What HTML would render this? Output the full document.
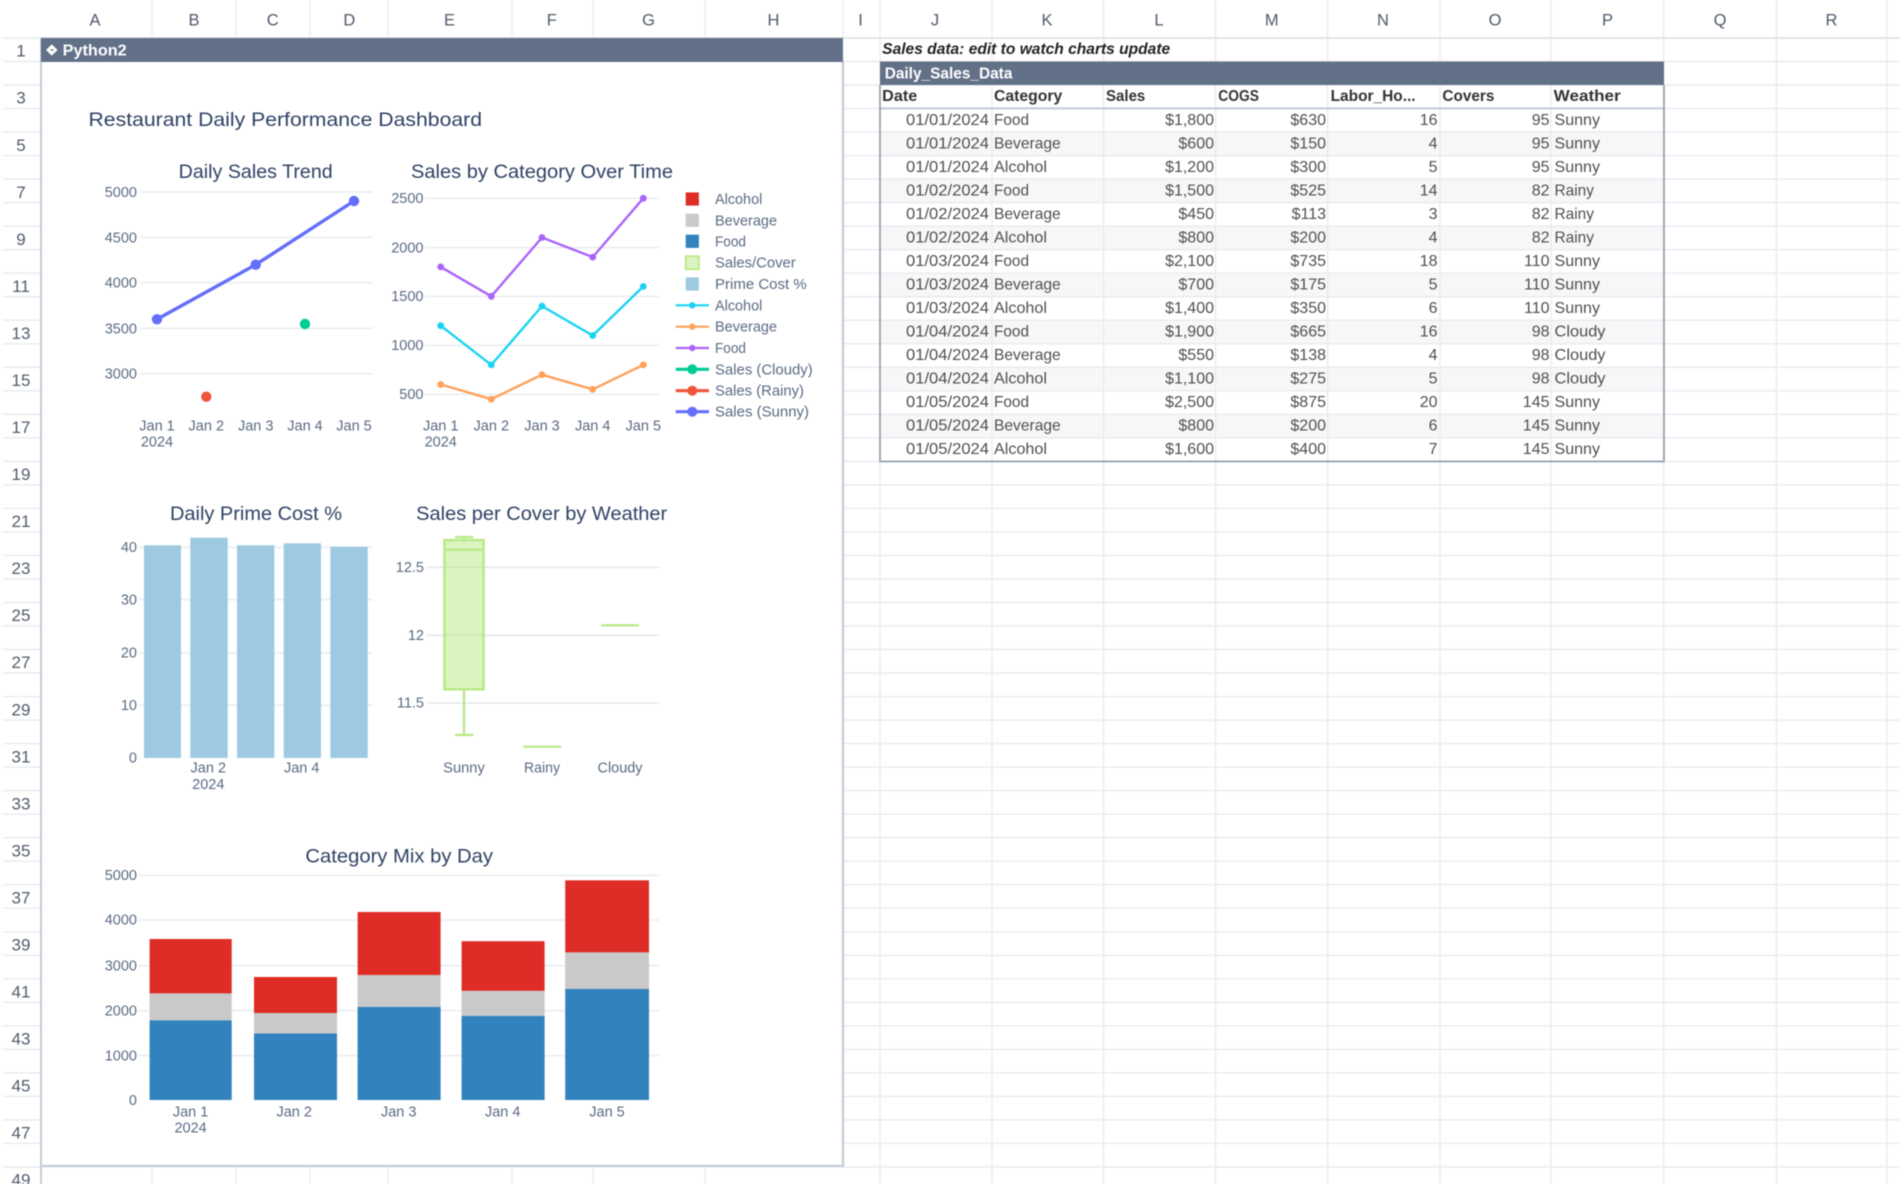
<!DOCTYPE html>
<html lang="en">
<head>
<meta charset="utf-8">
<title>Restaurant Daily Performance Dashboard</title>
<style>
html,body{margin:0;padding:0;background:#fff;width:1900px;height:1184px;overflow:hidden}
svg{display:block;filter:blur(.55px)}
text{font-family:"Liberation Sans",sans-serif}
.ch{font-size:16.5px;fill:#4f5a6b;text-anchor:middle}
.rh{font-size:17px;fill:#525c6c;text-anchor:middle}
.ttl{font-size:19.5px;fill:#2f4264;text-anchor:middle}
.tk{font-size:14.5px;fill:#5a6a84}
.ty{text-anchor:end}
.tx{text-anchor:middle}
.lg{font-size:14.5px;fill:#5a6a84}
.th{font-size:15.5px;font-weight:bold;fill:#333}
.td{font-size:16px;fill:#505050}
.r{text-anchor:end}
</style>
</head>
<body>
<svg xmlns="http://www.w3.org/2000/svg" width="1900" height="1184" viewBox="0 0 1900 1184">
<rect width="1900" height="1184" fill="#fff"/>

<!-- sheet grid -->
<g fill="none" stroke="#e8ebf0" stroke-width="1.4">
<path d="M843 85H1900M843 108.6H1900M843 132.1H1900M843 155.6H1900M843 179.1H1900M843 202.6H1900M843 226.2H1900M843 249.7H1900M843 273.2H1900M843 296.7H1900M843 320.2H1900M843 343.8H1900M843 367.3H1900M843 390.8H1900M843 414.3H1900M843 437.8H1900M843 461.4H1900M843 484.9H1900M843 508.4H1900M843 531.9H1900M843 555.4H1900M843 579H1900M843 602.5H1900M843 626H1900M843 649.5H1900M843 673H1900M843 696.6H1900M843 720.1H1900M843 743.6H1900M843 767.1H1900M843 790.6H1900M843 814.2H1900M843 837.7H1900M843 861.2H1900M843 884.7H1900M843 908.2H1900M843 931.8H1900M843 955.3H1900M843 978.8H1900M843 1002.3H1900M843 1025.8H1900M843 1049.4H1900M843 1072.9H1900M843 1096.4H1900M843 1119.9H1900M843 1143.4H1900M843 1167H1900M843 61.5H1900"/>
<path d="M3 38H41M3 61.5H41M3 85H41M3 108.6H41M3 132.1H41M3 155.6H41M3 179.1H41M3 202.6H41M3 226.2H41M3 249.7H41M3 273.2H41M3 296.7H41M3 320.2H41M3 343.8H41M3 367.3H41M3 390.8H41M3 414.3H41M3 437.8H41M3 461.4H41M3 484.9H41M3 508.4H41M3 531.9H41M3 555.4H41M3 579H41M3 602.5H41M3 626H41M3 649.5H41M3 673H41M3 696.6H41M3 720.1H41M3 743.6H41M3 767.1H41M3 790.6H41M3 814.2H41M3 837.7H41M3 861.2H41M3 884.7H41M3 908.2H41M3 931.8H41M3 955.3H41M3 978.8H41M3 1002.3H41M3 1025.8H41M3 1049.4H41M3 1072.9H41M3 1096.4H41M3 1119.9H41M3 1143.4H41M3 1167H41"/>
<path d="M152 0V38M236 0V38M310 0V38M388 0V38M512 0V38M593 0V38M705 0V38M843 0V38M880 0V38M992 0V38M1103.5 0V38M1215.5 0V38M1327.7 0V38M1440 0V38M1551 0V38M1663.6 0V38M1776.5 0V38M1887 0V38"/>
<path d="M152 1167V1184M236 1167V1184M310 1167V1184M388 1167V1184M512 1167V1184M593 1167V1184M705 1167V1184"/>
</g>
<path d="M41 38H1900" stroke="#e2e5ea" stroke-width="2"/>

<!-- zebra and table -->
<g fill="#f7f7f7">
<rect x="880" y="132.1" width="784" height="23.5"/><rect x="880" y="179.1" width="784" height="23.5"/><rect x="880" y="226.2" width="784" height="23.5"/><rect x="880" y="273.2" width="784" height="23.5"/><rect x="880" y="320.2" width="784" height="23.5"/><rect x="880" y="367.3" width="784" height="23.5"/><rect x="880" y="414.3" width="784" height="23.5"/>
</g>
<path d="M880 132.1H1664M880 155.6H1664M880 179.1H1664M880 202.6H1664M880 226.2H1664M880 249.7H1664M880 273.2H1664M880 296.7H1664M880 320.2H1664M880 343.8H1664M880 367.3H1664M880 390.8H1664M880 414.3H1664M880 437.8H1664" stroke="#e8ebf0" stroke-width="1.4" fill="none"/>
<path d="M880 38V1184M992 38V1184M1103.5 38V1184M1215.5 38V1184M1327.7 38V1184M1440 38V1184M1551 38V1184M1663.6 38V1184M1776.5 38V1184M1887 38V1184" stroke="#e8ebf0" stroke-width="1.4" fill="none"/>
<rect x="880" y="61.5" width="784" height="23.5" fill="#627188"/>
<path d="M880 108.4H1664" stroke="#c3cbd8" stroke-width="2"/>
<path d="M880 85V461.4H1664V85" fill="none" stroke="#8c9ab0" stroke-width="1.6"/>

<!-- column headers -->
<text class="ch" x="95" y="25.5">A</text><text class="ch" x="194" y="25.5">B</text><text class="ch" x="272.7" y="25.5">C</text><text class="ch" x="349.3" y="25.5">D</text><text class="ch" x="449.5" y="25.5">E</text><text class="ch" x="551.8" y="25.5">F</text><text class="ch" x="648.6" y="25.5">G</text><text class="ch" x="773.5" y="25.5">H</text><text class="ch" x="860.5" y="25.5">I</text><text class="ch" x="935" y="25.5">J</text><text class="ch" x="1047" y="25.5">K</text><text class="ch" x="1159" y="25.5">L</text><text class="ch" x="1271.7" y="25.5">M</text><text class="ch" x="1383" y="25.5">N</text><text class="ch" x="1495" y="25.5">O</text><text class="ch" x="1607.5" y="25.5">P</text><text class="ch" x="1720" y="25.5">Q</text><text class="ch" x="1831.5" y="25.5">R</text>

<!-- row headers -->
<g transform="translate(0 -.8)">
<text class="rh" x="21" y="57.5">1</text><text class="rh" x="21" y="104.5">3</text><text class="rh" x="21" y="151.6">5</text><text class="rh" x="21" y="198.6">7</text><text class="rh" x="21" y="245.7">9</text><text class="rh" x="21" y="292.7">11</text><text class="rh" x="21" y="339.7">13</text><text class="rh" x="21" y="386.8">15</text><text class="rh" x="21" y="433.8">17</text><text class="rh" x="21" y="480.9">19</text><text class="rh" x="21" y="527.9">21</text><text class="rh" x="21" y="574.9">23</text><text class="rh" x="21" y="622">25</text><text class="rh" x="21" y="669">27</text><text class="rh" x="21" y="716.1">29</text><text class="rh" x="21" y="763.1">31</text><text class="rh" x="21" y="810.1">33</text><text class="rh" x="21" y="857.2">35</text><text class="rh" x="21" y="904.2">37</text><text class="rh" x="21" y="951.3">39</text><text class="rh" x="21" y="998.3">41</text><text class="rh" x="21" y="1045.3">43</text><text class="rh" x="21" y="1092.4">45</text><text class="rh" x="21" y="1139.4">47</text><text class="rh" x="21" y="1186.5">49</text>
</g>

<!-- python cell -->
<rect x="41" y="61" width="802" height="1106" fill="#fff"/>
<path d="M41 38V1184" stroke="#c3cad6" stroke-width="2"/>
<path d="M843 61V1166H41" fill="none" stroke="#c8ced9" stroke-width="2.4"/>
<rect x="41" y="38" width="802" height="24" fill="#627188"/>
<path d="M51.7 44.4L57.6 50L51.7 55.6L46 50Z" fill="#fff"/>
<path d="M50.5 50H53.6" stroke="#7f8da3" stroke-width="1.6"/>
<text x="62.7" y="55.5" font-size="15.5" font-weight="bold" fill="#fff" textLength="64" lengthAdjust="spacingAndGlyphs">Python2</text>

<!-- main title -->
<text x="88.5" y="126" font-size="19.5" fill="#2f4264" textLength="393.5" lengthAdjust="spacingAndGlyphs">Restaurant Daily Performance Dashboard</text>

<!-- Chart 1 -->
<text class="ttl" x="255.7" y="177.8" textLength="154" lengthAdjust="spacingAndGlyphs">Daily Sales Trend</text>
<path d="M140 192H372.7M140 237.3H372.7M140 282.7H372.7M140 328.3H372.7M140 373.7H372.7" stroke="#e9ecf1" stroke-width="1.6" fill="none"/>
<g class="tk ty"><text x="137" y="197">5000</text><text x="137" y="242.3">4500</text><text x="137" y="287.7">4000</text><text x="137" y="333.3">3500</text><text x="137" y="378.7">3000</text></g>
<path d="M157 319.3L255.7 264.7L354 201" fill="none" stroke="#636efa" stroke-width="3.4"/>
<circle cx="157" cy="319.3" r="5.2" fill="#636efa"/><circle cx="255.7" cy="264.7" r="5.2" fill="#636efa"/><circle cx="354" cy="201" r="5.2" fill="#636efa"/>
<circle cx="206.3" cy="396.7" r="5.2" fill="#ef553b"/><circle cx="305" cy="324" r="5.2" fill="#00cc96"/>
<g class="tk tx"><text x="157" y="430.7">Jan 1</text><text x="157" y="446.7">2024</text><text x="206.3" y="430.7">Jan 2</text><text x="255.7" y="430.7">Jan 3</text><text x="305" y="430.7">Jan 4</text><text x="354" y="430.7">Jan 5</text></g>

<!-- Chart 2 -->
<text class="ttl" x="542" y="177.8" textLength="262" lengthAdjust="spacingAndGlyphs">Sales by Category Over Time</text>
<path d="M425 198.3H659M425 247.7H659M425 296.3H659M425 345.3H659M425 394.3H659" stroke="#e9ecf1" stroke-width="1.6" fill="none"/>
<g class="tk ty"><text x="423.5" y="203">2500</text><text x="423.5" y="252.4">2000</text><text x="423.5" y="301">1500</text><text x="423.5" y="350">1000</text><text x="423.5" y="399">500</text></g>
<g fill="none" stroke-width="2.4">
<path d="M440.7 266.9L491.3 296.3L542 237.5L592.7 257.1L643.3 198.3" stroke="#ab63fa"/>
<path d="M440.7 325.7L491.3 364.9L542 306.1L592.7 335.5L643.3 286.5" stroke="#19d3f3"/>
<path d="M440.7 384.5L491.3 399.2L542 374.7L592.7 389.4L643.3 364.9" stroke="#ffa15a"/>
</g>
<g fill="#ab63fa"><circle cx="440.7" cy="266.9" r="3.4"/><circle cx="491.3" cy="296.3" r="3.4"/><circle cx="542" cy="237.5" r="3.4"/><circle cx="592.7" cy="257.1" r="3.4"/><circle cx="643.3" cy="198.3" r="3.4"/></g>
<g fill="#19d3f3"><circle cx="440.7" cy="325.7" r="3.4"/><circle cx="491.3" cy="364.9" r="3.4"/><circle cx="542" cy="306.1" r="3.4"/><circle cx="592.7" cy="335.5" r="3.4"/><circle cx="643.3" cy="286.5" r="3.4"/></g>
<g fill="#ffa15a"><circle cx="440.7" cy="384.5" r="3.4"/><circle cx="491.3" cy="399.2" r="3.4"/><circle cx="542" cy="374.7" r="3.4"/><circle cx="592.7" cy="389.4" r="3.4"/><circle cx="643.3" cy="364.9" r="3.4"/></g>
<g class="tk tx"><text x="440.7" y="430.7">Jan 1</text><text x="440.7" y="446.7">2024</text><text x="491.3" y="430.7">Jan 2</text><text x="542" y="430.7">Jan 3</text><text x="592.7" y="430.7">Jan 4</text><text x="643.3" y="430.7">Jan 5</text></g>

<!-- Legend -->
<rect x="685.7" y="192.4" width="13.2" height="13.2" fill="#de2d26"/>
<rect x="685.7" y="213.7" width="13.2" height="13.2" fill="#c9c9c9"/>
<rect x="685.7" y="234.7" width="13.2" height="13.2" fill="#3182bd"/>
<rect x="685.7" y="256.1" width="13.2" height="13.2" fill="#daf3c0" stroke="#b6e880" stroke-width="1.6"/>
<rect x="685.7" y="277.4" width="13.2" height="13.2" fill="#9ecae1"/>
<path d="M675.7 305.3H709" stroke="#19d3f3" stroke-width="2.2"/><circle cx="692.3" cy="305.3" r="3.2" fill="#19d3f3"/>
<path d="M675.7 326.7H709" stroke="#ffa15a" stroke-width="2.2"/><circle cx="692.3" cy="326.7" r="3.2" fill="#ffa15a"/>
<path d="M675.7 348H709" stroke="#ab63fa" stroke-width="2.2"/><circle cx="692.3" cy="348" r="3.2" fill="#ab63fa"/>
<path d="M675.7 369.3H709" stroke="#00cc96" stroke-width="3.2"/><circle cx="692.3" cy="369.3" r="5" fill="#00cc96"/>
<path d="M675.7 390.7H709" stroke="#ef553b" stroke-width="3.2"/><circle cx="692.3" cy="390.7" r="5" fill="#ef553b"/>
<path d="M675.7 411.7H709" stroke="#636efa" stroke-width="3.2"/><circle cx="692.3" cy="411.7" r="5" fill="#636efa"/>
<g class="lg">
<text x="715" y="204" textLength="47.3" lengthAdjust="spacingAndGlyphs">Alcohol</text>
<text x="715" y="225.3" textLength="62" lengthAdjust="spacingAndGlyphs">Beverage</text>
<text x="715" y="246.3" textLength="31" lengthAdjust="spacingAndGlyphs">Food</text>
<text x="715" y="267.7" textLength="80.7" lengthAdjust="spacingAndGlyphs">Sales/Cover</text>
<text x="715" y="289" textLength="91.7" lengthAdjust="spacingAndGlyphs">Prime Cost %</text>
<text x="715" y="310.3" textLength="47.3" lengthAdjust="spacingAndGlyphs">Alcohol</text>
<text x="715" y="331.7" textLength="62" lengthAdjust="spacingAndGlyphs">Beverage</text>
<text x="715" y="353" textLength="31" lengthAdjust="spacingAndGlyphs">Food</text>
<text x="715" y="374.3" textLength="97.7" lengthAdjust="spacingAndGlyphs">Sales (Cloudy)</text>
<text x="715" y="395.7" textLength="89" lengthAdjust="spacingAndGlyphs">Sales (Rainy)</text>
<text x="715" y="416.7" textLength="94" lengthAdjust="spacingAndGlyphs">Sales (Sunny)</text>
</g>

<!-- Chart 3 -->
<text class="ttl" x="256" y="520" textLength="172" lengthAdjust="spacingAndGlyphs">Daily Prime Cost %</text>
<path d="M139 547.3H372.7M139 599.7H372.7M139 653H372.7M139 705.3H372.7" stroke="#e9ecf1" stroke-width="1.6" fill="none"/>
<g class="tk ty"><text x="137" y="552">40</text><text x="137" y="604.4">30</text><text x="137" y="657.7">20</text><text x="137" y="710">10</text><text x="137" y="762.7">0</text></g>
<g fill="#9ecae1">
<rect x="144" y="545.3" width="37" height="212.7"/>
<rect x="190.3" y="537.7" width="37.4" height="220.3"/>
<rect x="237" y="545.3" width="37.3" height="212.7"/>
<rect x="283.7" y="543.3" width="37.3" height="214.7"/>
<rect x="330.3" y="546.7" width="37.4" height="211.3"/>
</g>
<g class="tk tx"><text x="208.3" y="772.7">Jan 2</text><text x="208.3" y="789">2024</text><text x="301.7" y="772.7">Jan 4</text></g>

<!-- Chart 4 -->
<text class="ttl" x="541.7" y="520" textLength="251" lengthAdjust="spacingAndGlyphs">Sales per Cover by Weather</text>
<path d="M426.7 567.3H659.3M426.7 635.3H659.3M426.7 703H659.3" stroke="#e6e8ec" stroke-width="1.6" fill="none"/>
<g class="tk ty"><text x="424" y="572">12.5</text><text x="424" y="640">12</text><text x="424" y="707.7">11.5</text></g>
<rect x="444.3" y="540" width="39.4" height="149.3" fill="#b6e880" fill-opacity=".5" stroke="#b6e880" stroke-width="2.2"/>
<path d="M444.3 549.7H483.7M464 540V537M455 537H473.3M464 689.3V735M455 735H473.3M523.3 746.7H561M601 625.3H639" fill="none" stroke="#b6e880" stroke-width="2.2"/>
<g class="tk tx"><text x="464" y="772.7" textLength="41.7" lengthAdjust="spacingAndGlyphs">Sunny</text><text x="542" y="772.7" textLength="36" lengthAdjust="spacingAndGlyphs">Rainy</text><text x="620" y="772.7" textLength="45" lengthAdjust="spacingAndGlyphs">Cloudy</text></g>

<!-- Chart 5 -->
<text class="ttl" x="399.2" y="862.4" textLength="187.6" lengthAdjust="spacingAndGlyphs">Category Mix by Day</text>
<path d="M138.4 875.3H659M138.4 920H659M138.4 965.7H659M138.4 1010.7H659M138.4 1055.7H659" stroke="#e9ecf1" stroke-width="1.6" fill="none"/>
<g class="tk ty"><text x="137" y="880">5000</text><text x="137" y="924.7">4000</text><text x="137" y="970.4">3000</text><text x="137" y="1015.4">2000</text><text x="137" y="1060.4">1000</text><text x="137" y="1105">0</text></g>
<g fill="#3182bd">
<rect x="149.6" y="1020.2" width="82.1" height="79.8"/>
<rect x="254" y="1033.4" width="83" height="66.6"/>
<rect x="357.6" y="1006.8" width="83" height="93.2"/>
<rect x="461.6" y="1015.8" width="83" height="84.2"/>
<rect x="565.2" y="989" width="83.8" height="111"/>
</g>
<g fill="#c9c9c9">
<rect x="149.6" y="993.4" width="82.1" height="26.8"/>
<rect x="254" y="1013" width="83" height="20.4"/>
<rect x="357.6" y="975" width="83" height="31.8"/>
<rect x="461.6" y="990.8" width="83" height="25"/>
<rect x="565.2" y="952.4" width="83.8" height="36.6"/>
</g>
<g fill="#de2d26">
<rect x="149.6" y="939" width="82.1" height="54.4"/>
<rect x="254" y="977" width="83" height="36"/>
<rect x="357.6" y="912" width="83" height="63"/>
<rect x="461.6" y="941.2" width="83" height="49.6"/>
<rect x="565.2" y="880.3" width="83.8" height="72.1"/>
</g>
<g class="tk tx"><text x="190.6" y="1116.7">Jan 1</text><text x="190.6" y="1132.7">2024</text><text x="294.2" y="1116.7">Jan 2</text><text x="398.7" y="1116.7">Jan 3</text><text x="502.7" y="1116.7">Jan 4</text><text x="607" y="1116.7">Jan 5</text></g>

<!-- Sheet text -->
<text x="882.2" y="54" font-size="15.5" font-weight="bold" font-style="italic" fill="#222" textLength="288" lengthAdjust="spacingAndGlyphs">Sales data: edit to watch charts update</text>
<text x="884.7" y="78.3" font-size="15.5" font-weight="bold" fill="#fff" textLength="127.7" lengthAdjust="spacingAndGlyphs">Daily_Sales_Data</text>
<g class="th">
<text x="882.2" y="101" textLength="35" lengthAdjust="spacingAndGlyphs">Date</text>
<text x="994" y="101" textLength="68.3" lengthAdjust="spacingAndGlyphs">Category</text>
<text x="1106" y="101" textLength="39.3" lengthAdjust="spacingAndGlyphs">Sales</text>
<text x="1218.3" y="101" textLength="40.7" lengthAdjust="spacingAndGlyphs">COGS</text>
<text x="1330.6" y="101" textLength="85" lengthAdjust="spacingAndGlyphs">Labor_Ho...</text>
<text x="1442.4" y="101" textLength="52" lengthAdjust="spacingAndGlyphs">Covers</text>
<text x="1553.7" y="101" textLength="67" lengthAdjust="spacingAndGlyphs">Weather</text>
</g>
<g class="td">
<g transform="translate(0 125)"><text x="906" textLength="83" lengthAdjust="spacingAndGlyphs">01/01/2024</text><text x="994" textLength="35" lengthAdjust="spacingAndGlyphs">Food</text><text class="r" x="1214">$1,800</text><text class="r" x="1326">$630</text><text class="r" x="1437.5">16</text><text class="r" x="1549.5">95</text><text x="1554.5" textLength="45.5" lengthAdjust="spacingAndGlyphs">Sunny</text></g>
<g transform="translate(0 148.5)"><text x="906" textLength="83" lengthAdjust="spacingAndGlyphs">01/01/2024</text><text x="994" textLength="66.7" lengthAdjust="spacingAndGlyphs">Beverage</text><text class="r" x="1214">$600</text><text class="r" x="1326">$150</text><text class="r" x="1437.5">4</text><text class="r" x="1549.5">95</text><text x="1554.5" textLength="45.5" lengthAdjust="spacingAndGlyphs">Sunny</text></g>
<g transform="translate(0 172)"><text x="906" textLength="83" lengthAdjust="spacingAndGlyphs">01/01/2024</text><text x="994" textLength="53" lengthAdjust="spacingAndGlyphs">Alcohol</text><text class="r" x="1214">$1,200</text><text class="r" x="1326">$300</text><text class="r" x="1437.5">5</text><text class="r" x="1549.5">95</text><text x="1554.5" textLength="45.5" lengthAdjust="spacingAndGlyphs">Sunny</text></g>
<g transform="translate(0 195.5)"><text x="906" textLength="83" lengthAdjust="spacingAndGlyphs">01/02/2024</text><text x="994" textLength="35" lengthAdjust="spacingAndGlyphs">Food</text><text class="r" x="1214">$1,500</text><text class="r" x="1326">$525</text><text class="r" x="1437.5">14</text><text class="r" x="1549.5">82</text><text x="1554.5" textLength="39.4" lengthAdjust="spacingAndGlyphs">Rainy</text></g>
<g transform="translate(0 219)"><text x="906" textLength="83" lengthAdjust="spacingAndGlyphs">01/02/2024</text><text x="994" textLength="66.7" lengthAdjust="spacingAndGlyphs">Beverage</text><text class="r" x="1214">$450</text><text class="r" x="1326">$113</text><text class="r" x="1437.5">3</text><text class="r" x="1549.5">82</text><text x="1554.5" textLength="39.4" lengthAdjust="spacingAndGlyphs">Rainy</text></g>
<g transform="translate(0 242.5)"><text x="906" textLength="83" lengthAdjust="spacingAndGlyphs">01/02/2024</text><text x="994" textLength="53" lengthAdjust="spacingAndGlyphs">Alcohol</text><text class="r" x="1214">$800</text><text class="r" x="1326">$200</text><text class="r" x="1437.5">4</text><text class="r" x="1549.5">82</text><text x="1554.5" textLength="39.4" lengthAdjust="spacingAndGlyphs">Rainy</text></g>
<g transform="translate(0 266)"><text x="906" textLength="83" lengthAdjust="spacingAndGlyphs">01/03/2024</text><text x="994" textLength="35" lengthAdjust="spacingAndGlyphs">Food</text><text class="r" x="1214">$2,100</text><text class="r" x="1326">$735</text><text class="r" x="1437.5">18</text><text class="r" x="1549.5">110</text><text x="1554.5" textLength="45.5" lengthAdjust="spacingAndGlyphs">Sunny</text></g>
<g transform="translate(0 289.5)"><text x="906" textLength="83" lengthAdjust="spacingAndGlyphs">01/03/2024</text><text x="994" textLength="66.7" lengthAdjust="spacingAndGlyphs">Beverage</text><text class="r" x="1214">$700</text><text class="r" x="1326">$175</text><text class="r" x="1437.5">5</text><text class="r" x="1549.5">110</text><text x="1554.5" textLength="45.5" lengthAdjust="spacingAndGlyphs">Sunny</text></g>
<g transform="translate(0 313)"><text x="906" textLength="83" lengthAdjust="spacingAndGlyphs">01/03/2024</text><text x="994" textLength="53" lengthAdjust="spacingAndGlyphs">Alcohol</text><text class="r" x="1214">$1,400</text><text class="r" x="1326">$350</text><text class="r" x="1437.5">6</text><text class="r" x="1549.5">110</text><text x="1554.5" textLength="45.5" lengthAdjust="spacingAndGlyphs">Sunny</text></g>
<g transform="translate(0 336.5)"><text x="906" textLength="83" lengthAdjust="spacingAndGlyphs">01/04/2024</text><text x="994" textLength="35" lengthAdjust="spacingAndGlyphs">Food</text><text class="r" x="1214">$1,900</text><text class="r" x="1326">$665</text><text class="r" x="1437.5">16</text><text class="r" x="1549.5">98</text><text x="1554.5" textLength="51" lengthAdjust="spacingAndGlyphs">Cloudy</text></g>
<g transform="translate(0 360)"><text x="906" textLength="83" lengthAdjust="spacingAndGlyphs">01/04/2024</text><text x="994" textLength="66.7" lengthAdjust="spacingAndGlyphs">Beverage</text><text class="r" x="1214">$550</text><text class="r" x="1326">$138</text><text class="r" x="1437.5">4</text><text class="r" x="1549.5">98</text><text x="1554.5" textLength="51" lengthAdjust="spacingAndGlyphs">Cloudy</text></g>
<g transform="translate(0 383.5)"><text x="906" textLength="83" lengthAdjust="spacingAndGlyphs">01/04/2024</text><text x="994" textLength="53" lengthAdjust="spacingAndGlyphs">Alcohol</text><text class="r" x="1214">$1,100</text><text class="r" x="1326">$275</text><text class="r" x="1437.5">5</text><text class="r" x="1549.5">98</text><text x="1554.5" textLength="51" lengthAdjust="spacingAndGlyphs">Cloudy</text></g>
<g transform="translate(0 407)"><text x="906" textLength="83" lengthAdjust="spacingAndGlyphs">01/05/2024</text><text x="994" textLength="35" lengthAdjust="spacingAndGlyphs">Food</text><text class="r" x="1214">$2,500</text><text class="r" x="1326">$875</text><text class="r" x="1437.5">20</text><text class="r" x="1549.5">145</text><text x="1554.5" textLength="45.5" lengthAdjust="spacingAndGlyphs">Sunny</text></g>
<g transform="translate(0 430.5)"><text x="906" textLength="83" lengthAdjust="spacingAndGlyphs">01/05/2024</text><text x="994" textLength="66.7" lengthAdjust="spacingAndGlyphs">Beverage</text><text class="r" x="1214">$800</text><text class="r" x="1326">$200</text><text class="r" x="1437.5">6</text><text class="r" x="1549.5">145</text><text x="1554.5" textLength="45.5" lengthAdjust="spacingAndGlyphs">Sunny</text></g>
<g transform="translate(0 454)"><text x="906" textLength="83" lengthAdjust="spacingAndGlyphs">01/05/2024</text><text x="994" textLength="53" lengthAdjust="spacingAndGlyphs">Alcohol</text><text class="r" x="1214">$1,600</text><text class="r" x="1326">$400</text><text class="r" x="1437.5">7</text><text class="r" x="1549.5">145</text><text x="1554.5" textLength="45.5" lengthAdjust="spacingAndGlyphs">Sunny</text></g>
</g>
</svg>
</body>
</html>
